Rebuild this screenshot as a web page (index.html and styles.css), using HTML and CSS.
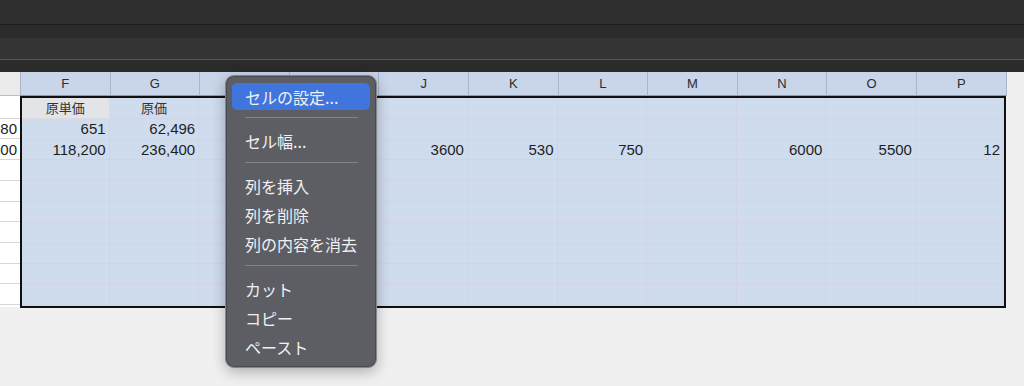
FILE: index.html
```html
<!DOCTYPE html>
<html lang="ja">
<head>
  <meta charset="UTF-8">
  <meta name="viewport" content="width=device-width, initial-scale=1.0">
  <title>シート</title>
  <link rel="stylesheet" href="styles.css">
</head>
<body>

<div class="toolbar">
  <div class="bar bar-title"></div>
  <div class="bar bar-tools"></div>
  <div class="bar bar-format"></div>
  <div class="bar bar-formula"></div>
</div>

<div class="sheet">
  <div class="head-row">
    <div class="corner"></div>
    <div class="col-head">F</div>
    <div class="col-head">G</div>
    <div class="col-head"></div>
    <div class="col-head"></div>
    <div class="col-head">J</div>
    <div class="col-head">K</div>
    <div class="col-head">L</div>
    <div class="col-head">M</div>
    <div class="col-head">N</div>
    <div class="col-head">O</div>
    <div class="col-head">P</div>
    <div class="head-rest"></div>
  </div>

  <div class="body-row">
    <div class="gutter" id="gutter"></div>
    <div class="selection" id="grid"></div>
    <div class="body-rest"></div>
  </div>
</div>

<div class="menu">
  <div class="item active">セルの設定...</div>
  <div class="sep"></div>
  <div class="item">セル幅...</div>
  <div class="sep"></div>
  <div class="item">列を挿入</div>
  <div class="item">列を削除</div>
  <div class="item">列の内容を消去</div>
  <div class="sep"></div>
  <div class="item">カット</div>
  <div class="item">コピー</div>
  <div class="item">ペースト</div>
</div>

<script>
  // columns F..P, rows 1..10
  const cols = 11;
  const rows = 10;
  const data = {
    "0,0": { text: "原単価", cls: "label gray" },
    "0,1": { text: "原価", cls: "label" },
    "1,0": { text: "651" },
    "1,1": { text: "62,496" },
    "2,0": { text: "118,200" },
    "2,1": { text: "236,400" },
    "2,4": { text: "3600" },
    "2,5": { text: "530" },
    "2,6": { text: "750" },
    "2,8": { text: "6000" },
    "2,9": { text: "5500" },
    "2,10": { text: "12" }
  };
  const gutterText = { 1: "80", 2: "00" };

  const grid = document.getElementById("grid");
  for (let r = 0; r < rows; r++) {
    for (let c = 0; c < cols; c++) {
      const cell = document.createElement("div");
      cell.className = "cell";
      const d = data[r + "," + c];
      if (d) {
        cell.textContent = d.text;
        if (d.cls) cell.className += " " + d.cls;
      }
      grid.appendChild(cell);
    }
  }

  const gutter = document.getElementById("gutter");
  for (let r = 0; r < rows; r++) {
    const g = document.createElement("div");
    g.className = "gcell";
    if (gutterText[r]) g.innerHTML = "<span>" + gutterText[r] + "</span>";
    gutter.appendChild(g);
  }
</script>

</body>
</html>
```

FILE: styles.css
```css
body {
  margin: 0;
  height: 386px;
  overflow: hidden;
  background-color: #f0f0f0;
  font-family: "Liberation Sans", "Noto Sans CJK JP", sans-serif;
  color: #1e1e1e;
}

/* dark window chrome */
.toolbar {
  display: flex;
  flex-direction: column;
}

.bar-title {
  height: 24px;
  background-color: #2f2f2f;
  border-bottom: 1px solid #1b1b1b;
}

.bar-tools {
  height: 13px;
  background-color: #2b2b2b;
}

.bar-format {
  height: 21px;
  background-color: #343434;
  border-bottom: 1px solid #565656;
}

.bar-formula {
  height: 12px;
  background-color: #2b2b2b;
}

/* column headers */
.head-row {
  display: flex;
  height: 24px;
}

.corner {
  flex: 0 0 20px;
  background-color: #ebebeb;
  border-bottom: 1px solid #bdbdbd;
  box-sizing: border-box;
}

.col-head {
  flex: 0 0 89.6px;
  box-sizing: border-box;
  background-color: #c9d5e8;
  border-left: 1px solid #a9b5c9;
  border-bottom: 1px solid #8e99ab;
  display: flex;
  align-items: center;
  justify-content: center;
  font-size: 13px;
  color: #2c2c2c;
}

.head-rest {
  flex: 1;
  background-color: #efefef;
  border-left: 1px solid #a9b5c9;
}

/* cells */
.body-row {
  display: flex;
  height: 212px;
}

.gutter {
  flex: 0 0 20px;
  background-color: #ffffff;
  display: grid;
  grid-template-rows: repeat(10, 1fr);
  padding: 2px 0;
  box-sizing: border-box;
  height: 211px;
}

.gcell {
  border-bottom: 1px solid #d6d6d6;
  overflow: hidden;
  display: flex;
  justify-content: flex-end;
  align-items: center;
  font-size: 15px;
}

.gcell span {
  padding-right: 3px;
  white-space: nowrap;
}

.selection {
  flex: 0 0 986px;
  box-sizing: border-box;
  border: 2px solid #101010;
  background-color: #cfdcee;
  display: grid;
  grid-template-columns: 87.6px repeat(9, 89.6px) 1fr;
  grid-template-rows: repeat(10, 1fr);
  overflow: hidden;
}

.cell {
  border-right: 1px solid rgba(215, 200, 215, 0.4);
  border-bottom: 1px solid rgba(215, 200, 215, 0.4);
  display: flex;
  align-items: center;
  justify-content: flex-end;
  padding-right: 3px;
  font-size: 15px;
  white-space: nowrap;
  overflow: hidden;
}

.cell.label {
  justify-content: center;
  padding-right: 0;
  font-size: 13px;
  color: #333;
}

.cell.gray {
  background-color: #e3e4e7;
}

.body-rest {
  flex: 1;
}

/* context menu */
.menu {
  position: absolute;
  left: 225px;
  top: 75px;
  width: 152px;
  box-sizing: border-box;
  padding: 6px 6px;
  background-color: #5d5e64;
  border: 1px solid #86878b;
  border-radius: 9px;
  box-shadow: 0 4px 14px rgba(0, 0, 0, 0.28), inset 0 0 0 1px #4a4b50;
  font-family: "Noto Sans CJK JP", "Liberation Sans", sans-serif;
}

.item {
  height: 29px;
  display: flex;
  align-items: center;
  padding-left: 13px;
  border-radius: 5px;
  font-size: 16px;
  color: #f0f0f2;
  white-space: nowrap;
}

.item.active {
  background-color: #3f75dc;
  height: 27px;
  margin: 1px 0;
}

.sep {
  height: 1px;
  margin: 7px 12px 8px 13px;
  background-color: #82838a;
}
```
